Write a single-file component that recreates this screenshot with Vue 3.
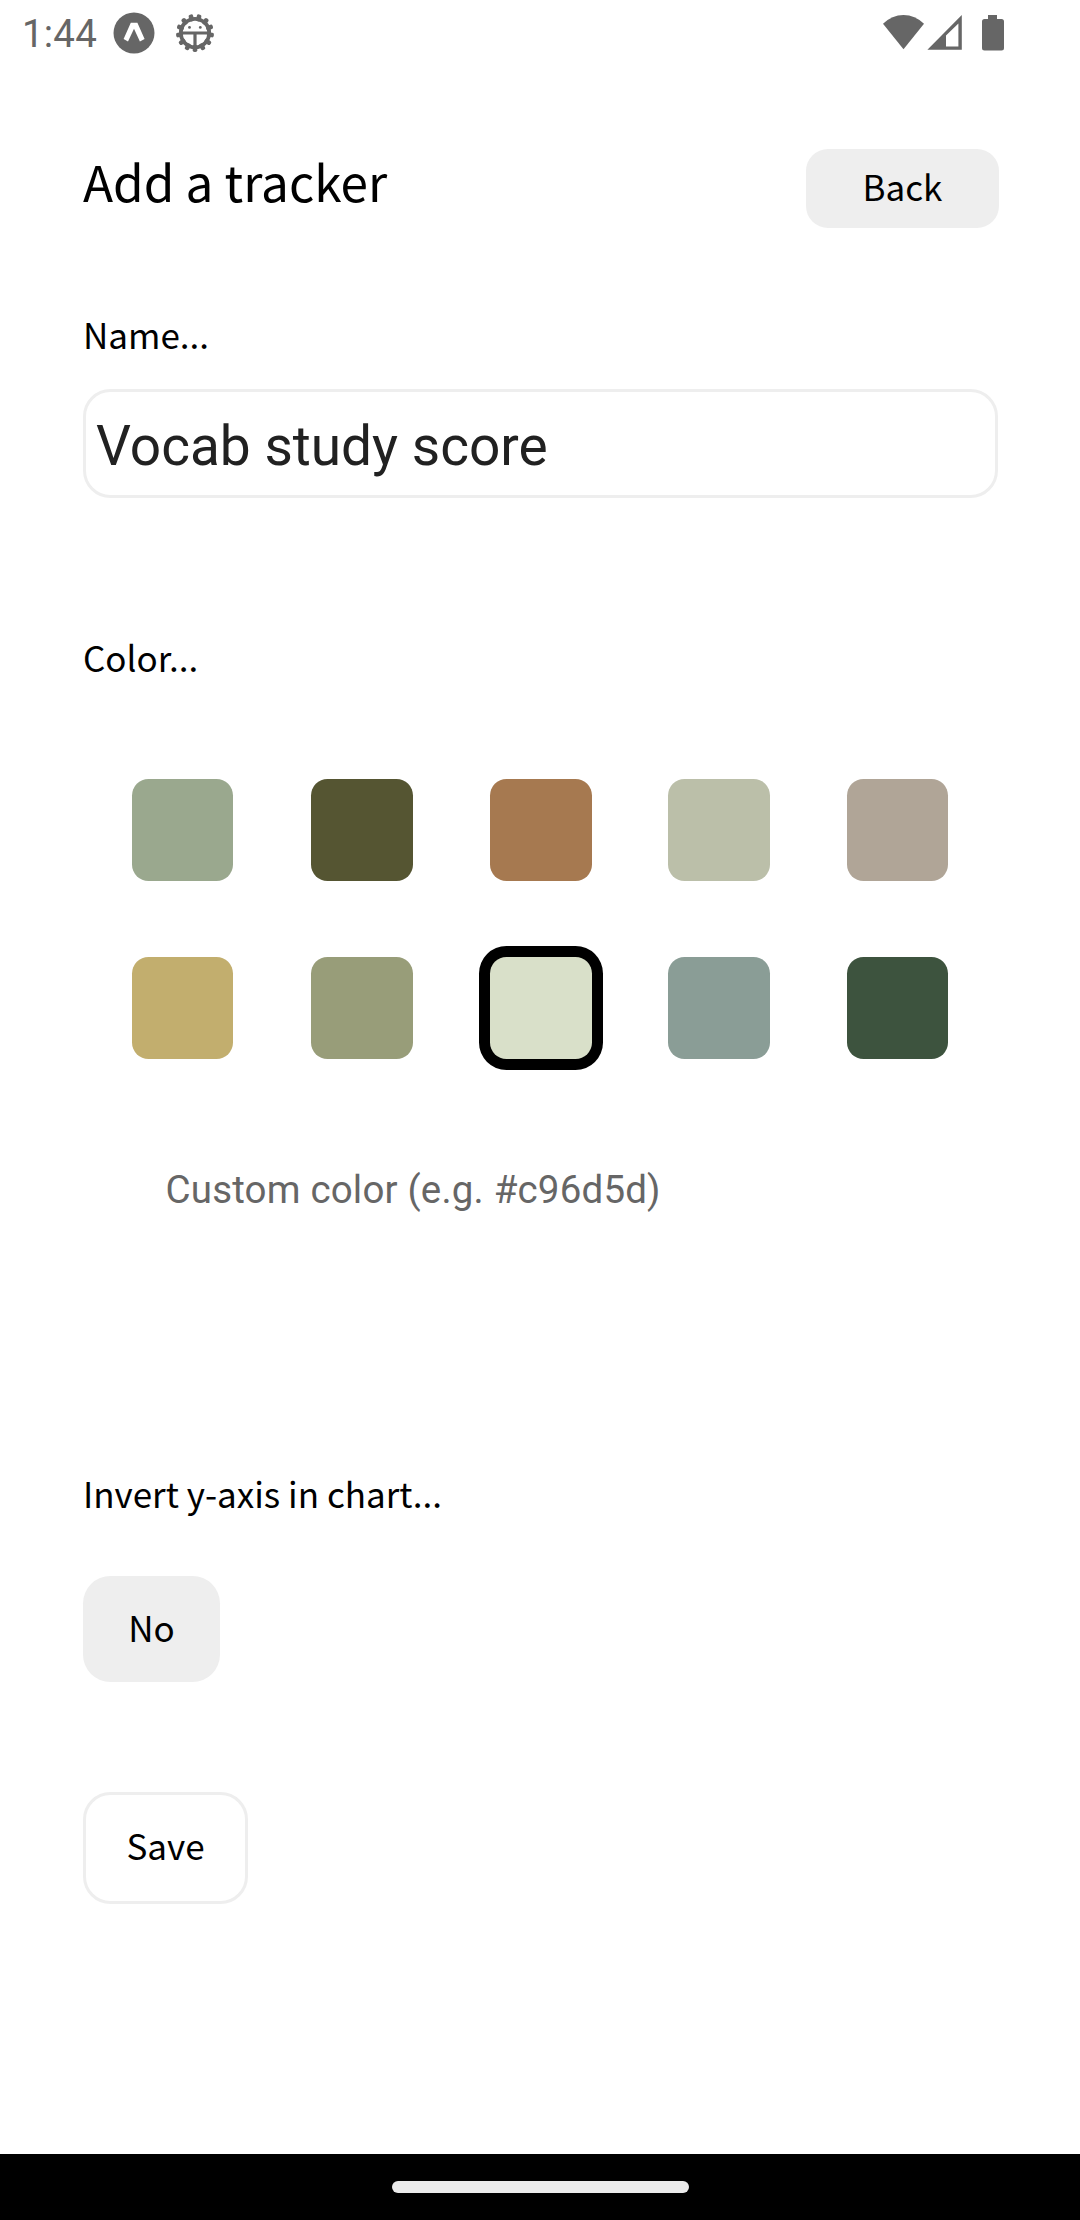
<script setup>
import { ref } from 'vue'

const name = ref('Vocab study score')
const customColor = ref('')
const inverted = ref(false)
const selected = ref('#d9e0c9')

const colors = [
  { hex: '#9aa88e', width: 101 },
  { hex: '#555532', width: 102 },
  { hex: '#a67950', width: 102 },
  { hex: '#bbbfa9', width: 102 },
  { hex: '#b0a597', width: 101 },
  { hex: '#c2ae6e', width: 101 },
  { hex: '#989d79', width: 102 },
  { hex: '#d9e0c9', width: 102 },
  { hex: '#8a9d96', width: 102 },
  { hex: '#3d533e', width: 101 },
]

const teeth = Array.from({ length: 13 }, (_, i) => 180 + (i * 360) / 13)
</script>

<template>
  <div class="screen">
    <header class="status">
      <span class="clock">1:44</span>
      <svg class="expo" width="42" height="42" viewBox="0 0 42 42">
        <circle cx="21" cy="21" r="20.5" fill="#666" />
        <path d="M17.8 10.7h6.6l7.2 16.4-4.7 2.5L21 16.7l-6 12.9-4.400-2.500z" fill="#fff" />
      </svg>
      <svg class="gear" width="40" height="40" viewBox="-20 -20 40 40">
        <rect
          v-for="a in teeth"
          :key="a"
          x="-2.3"
          y="-19"
          width="4.6"
          height="7"
          rx="1.800"
          fill="#666"
          :transform="`rotate(${a})`"
        />
        <circle r="14.2" fill="none" stroke="#666" stroke-width="3.800" />
        <path d="M-14 0H14M0 0V14" stroke="#666" stroke-width="3.200" />
        <circle cx="-5.500" cy="-5.600" r="1.400" fill="#666" />
        <circle cx="5.300" cy="-5.600" r="1.400" fill="#666" />
      </svg>
      <svg class="signals" width="122" height="38" viewBox="0 0 122 38">
        <path d="M0 9.8Q9 1 20.5 1T41 9.8L20.5 35.2z" fill="#666" />
        <path d="M78.8 1v34.8H44.4zM75.4 9.4L63 21.4v11h12.4z" fill="#666" fill-rule="evenodd" />
        <path d="M105 1h9v4h4.500q2.500 0 2.500 2.500V34q0 2.500-2.500 2.500H101.500Q99 36.500 99 34V7.500Q99 5 101.500 5H105z" fill="#666" />
      </svg>
    </header>

    <main class="content">
      <div class="head">
        <h1 class="title">Add a tracker</h1>
        <button class="back">Back</button>
      </div>

      <label class="label name-label">Name...</label>
      <input v-model="name" class="name" type="text" />

      <div class="label color-label">Color...</div>
      <div class="palette">
        <button
          v-for="c in colors"
          :key="c.hex"
          class="swatch"
          :class="{ selected: c.hex === selected }"
          :style="{ width: c.width + 'px', backgroundColor: c.hex }"
          @click="selected = c.hex"
        ></button>
      </div>
      <input v-model="customColor" class="custom" type="text" placeholder="Custom color (e.g. #c96d5d)" />

      <div class="label invert-label">Invert y-axis in chart...</div>
      <button class="toggle" @click="inverted = !inverted">{{ inverted ? 'Yes' : 'No' }}</button>
      <button class="save">Save</button>
    </main>

    <footer class="nav"><div class="pill"></div></footer>
  </div>
</template>

<style>
body {
  margin: 0;
  background: #fff;
}
</style>

<style scoped>
.screen {
  width: 1080px;
  height: 2220px;
  display: flex;
  flex-direction: column;
  overflow: hidden;
  background: #fff;
  color: #000;
  font-family: "Noto Sans CJK JP", "Noto Sans", sans-serif;
}
button,
input {
  box-sizing: border-box;
  display: block;
  margin: 0;
  padding: 0;
  border: 0;
  outline: 0;
  background: none;
  color: inherit;
  font-family: inherit;
}
.status {
  display: flex;
  align-items: flex-start;
  height: 66px;
}
.clock {
  width: 90px;
  margin: 11px 0 0 22px;
  font: 38.5px/46px Roboto, sans-serif;
  letter-spacing: 0.2px;
  color: #666;
}
.expo {
  margin: 12px 0 0 0.5px;
}
.gear {
  margin: 13px 0 0 20px;
}
.signals {
  margin: 14px 0 0 668.5px;
}
.content {
  flex: 1;
  display: flex;
  flex-direction: column;
  align-items: flex-start;
  padding: 83px 81px 0 83px;
}
.head {
  display: flex;
  justify-content: space-between;
  width: 100%;
  height: 79px;
}
.title {
  margin: 0;
  font-size: 49.5px;
  font-weight: 400;
  line-height: 64px;
}
.back {
  width: 193px;
  height: 79px;
  padding-bottom: 5px;
  border-radius: 22px;
  background: #eee;
  font-size: 35px;
  line-height: 74px;
}
.label {
  height: 50px;
  font-size: 35px;
  line-height: 46px;
}
.name-label {
  margin-top: 83px;
}
.name {
  width: 915px;
  height: 109px;
  margin-top: 28px;
  padding: 4px 10px 0;
  border: 3px solid #eee;
  border-radius: 27.5px;
  color: #212121;
  font: 55px/64px Roboto, sans-serif;
}
.color-label {
  margin-top: 136px;
}
.palette {
  display: grid;
  grid-template-columns: 179px 179px 178px 179px 101px;
  grid-auto-rows: 102px;
  row-gap: 76px;
  margin: 95px 0 0 49px;
}
.swatch {
  height: 102px;
  border-radius: 16.5px;
}
.selected {
  box-shadow: 0 0 0 11px #000;
}
.custom {
  width: 700px;
  height: 60px;
  margin: 100px 0 0 82.5px;
  font: 38.5px/46px Roboto, sans-serif;
  letter-spacing: 0.18px;
}
.custom::placeholder {
  color: #666;
  opacity: 1;
}
.invert-label {
  margin-top: 251px;
}
.toggle {
  width: 137px;
  height: 106px;
  margin-top: 56px;
  padding-bottom: 5px;
  border-radius: 27.5px;
  background: #eee;
  font-size: 35px;
}
.save {
  width: 165px;
  height: 112px;
  margin-top: 110px;
  padding-bottom: 7px;
  border: 3px solid #eee;
  border-radius: 27.5px;
  font-size: 35px;
}
.nav {
  display: flex;
  justify-content: center;
  align-items: flex-start;
  height: 66px;
  background: #000;
}
.pill {
  width: 297px;
  height: 11.5px;
  margin-top: 27px;
  border-radius: 6px;
  background: #ebebeb;
}
</style>
